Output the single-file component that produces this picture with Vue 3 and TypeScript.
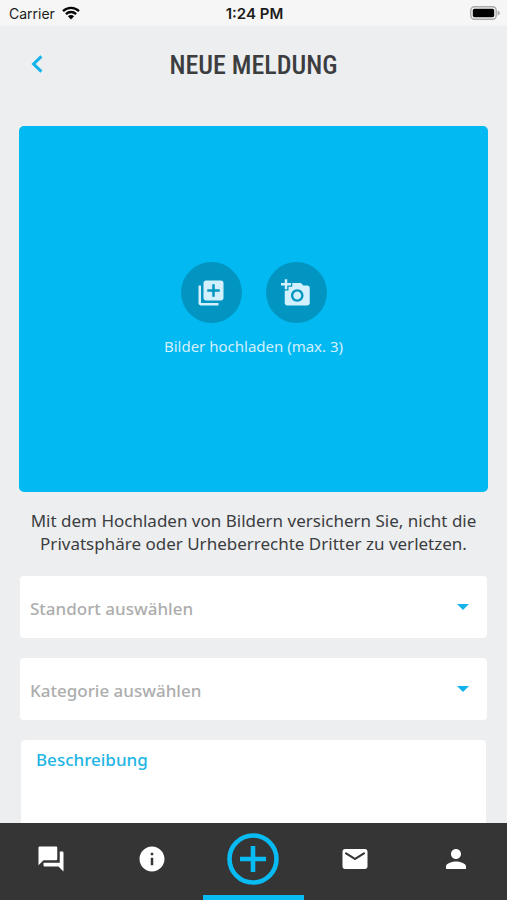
<script setup lang="ts">
import { ref } from 'vue'

interface Picker {
  id: string
  placeholder: string
  options: string[]
}

interface Tab {
  id: string
  label: string
  path: string
}

const pickers: Picker[] = [
  { id: 'standort', placeholder: 'Standort auswählen', options: [] },
  { id: 'kategorie', placeholder: 'Kategorie auswählen', options: [] },
]

const tabs: Tab[] = [
  {
    id: 'forum',
    label: 'Forum',
    path: 'M21 6h-2v9H6v2c0 .55.45 1 1 1h11l4 4V7c0-.55-.45-1-1-1zm-4 6V3c0-.55-.45-1-1-1H3c-.55 0-1 .45-1 1v14l4-4h10c.55 0 1-.45 1-1z',
  },
  {
    id: 'info',
    label: 'Info',
    path: 'M12 2C6.48 2 2 6.48 2 12s4.48 10 10 10 10-4.48 10-10S17.52 2 12 2zm1 15h-2v-6h2v6zm0-8h-2V7h2v2z',
  },
  { id: 'new', label: 'Neue Meldung', path: '' },
  {
    id: 'mail',
    label: 'Nachrichten',
    path: 'M20 4H4c-1.1 0-2 .9-2 2v12c0 1.1.9 2 2 2h16c1.1 0 2-.9 2-2V6c0-1.1-.9-2-2-2zm-.4 4.25-7.07 4.42c-.32.2-.74.2-1.06 0L4.4 8.25a.85.85 0 1 1 .9-1.44L12 11l6.7-4.19a.85.85 0 1 1 .9 1.44z',
  },
  {
    id: 'profile',
    label: 'Profil',
    path: 'M12 12c2.21 0 4-1.79 4-4s-1.79-4-4-4-4 1.79-4 4 1.79 4 4 4zm0 2c-2.67 0-8 1.34-8 4v2h16v-2c0-2.66-5.33-4-8-4z',
  },
]

const active = ref('new')
const selected = ref<Record<string, string>>({ standort: '', kategorie: '' })
const description = ref('')
</script>

<template>
  <div class="screen">
    <div class="status">
      <div class="carrier">
        <span>Carrier</span>
        <svg class="wifi" viewBox="0 0 18 14" aria-hidden="true">
          <path d="M1 5.2a11.5 11.5 0 0 1 16 0M3.9 8.1a7.3 7.3 0 0 1 10.2 0" fill="none" stroke="#050505" stroke-width="2.3" />
          <path d="M5.9 10.2a4.4 4.4 0 0 1 6.2 0L9 13.6z" fill="#050505" />
        </svg>
      </div>
      <strong class="time">1:24 PM</strong>
      <svg class="battery" viewBox="0 0 30 14" aria-hidden="true">
        <rect x="0.8" y="0.8" width="25.4" height="12.4" rx="3.6" fill="#f6f6f6" stroke="#a9a9a9" stroke-width="1.4" />
        <rect x="2.8" y="2.8" width="21.4" height="8.4" rx="1.6" fill="#000" />
        <path d="M27.6 4.6c1.6.5 2.2 1.4 2.2 2.4s-.6 1.9-2.2 2.4z" fill="#a9a9a9" />
      </svg>
    </div>

    <header class="header">
      <button class="back" type="button" aria-label="Zurück">
        <svg viewBox="0 0 12 18" aria-hidden="true">
          <path d="M10.4 1.4 2.6 9l7.8 7.6" fill="none" stroke="#14b2ea" stroke-width="3" />
        </svg>
      </button>
      <h1>NEUE MELDUNG</h1>
    </header>

    <main class="content">
      <section class="upload">
        <div class="actions">
          <button type="button" aria-label="Bilder aus Galerie wählen">
            <svg viewBox="0 0 24 24" aria-hidden="true">
              <path d="M4 6H2v14c0 1.1.9 2 2 2h14v-2H4V6zm16-4H8c-1.1 0-2 .9-2 2v12c0 1.1.9 2 2 2h12c1.1 0 2-.9 2-2V4c0-1.1-.9-2-2-2zm-1 9h-4v4h-2v-4H9V9h4V5h2v4h4v2z" />
            </svg>
          </button>
          <button type="button" aria-label="Foto aufnehmen">
            <svg viewBox="0 0 24 24" aria-hidden="true">
              <path d="M3 4V1h2v3h3v2H5v3H3V6H0V4h3zm3 6V7h3V4h7l1.83 2H21c1.1 0 2 .9 2 2v12c0 1.1-.9 2-2 2H5c-1.1 0-2-.9-2-2V10h3zm7 9c2.76 0 5-2.24 5-5s-2.24-5-5-5-5 2.24-5 5 2.24 5 5 5zm-3.2-5c0 1.77 1.43 3.2 3.2 3.2s3.2-1.43 3.2-3.2-1.43-3.2-3.2-3.2-3.2 1.43-3.2 3.2z" />
            </svg>
          </button>
        </div>
        <p>Bilder hochladen (max. 3)</p>
      </section>

      <p class="notice">
        Mit dem Hochladen von Bildern versichern Sie, nicht die Privatsphäre oder Urheberrechte Dritter zu verletzen.
      </p>

      <div v-for="picker in pickers" :key="picker.id" class="picker">
        <select :id="picker.id" v-model="selected[picker.id]" :aria-label="picker.placeholder">
          <option value="">{{ picker.placeholder }}</option>
          <option v-for="option in picker.options" :key="option">{{ option }}</option>
        </select>
        <svg class="caret" viewBox="0 0 12 6" aria-hidden="true">
          <path d="M0 0h12L6 6z" fill="#14b2ea" />
        </svg>
      </div>

      <div class="description">
        <label for="beschreibung">Beschreibung</label>
        <textarea id="beschreibung" v-model="description" rows="4"></textarea>
      </div>
    </main>

    <nav class="tabs">
      <button
        v-for="tab in tabs"
        :key="tab.id"
        type="button"
        :class="{ active: active === tab.id }"
        :aria-label="tab.label"
        @click="active = tab.id"
      >
        <svg v-if="tab.path" class="icon" viewBox="0 0 24 24" aria-hidden="true">
          <path :d="tab.path" />
        </svg>
        <svg v-else class="plus" viewBox="0 0 52 52" aria-hidden="true">
          <circle cx="26" cy="26" r="23.5" fill="none" stroke="#08bbf3" stroke-width="4.6" />
          <path d="M26 13v26M13 26h26" stroke="#08bbf3" stroke-width="4.6" />
        </svg>
      </button>
    </nav>
  </div>
</template>

<style>
body {
  margin: 0;
  background: #eceef0;
}
</style>

<style scoped>
.screen {
  display: flex;
  flex-direction: column;
  height: 100vh;
  overflow: hidden;
  background: #eceef0;
  color: #3c3d3f;
  font-family: "Noto Sans", "Open Sans", sans-serif;
}

button {
  padding: 0;
  border: 0;
  background: none;
  cursor: pointer;
}

svg {
  display: block;
}

.status {
  display: grid;
  grid-template-columns: 1fr auto 1fr;
  align-items: center;
  flex: none;
  height: 26px;
  padding: 0 7px 0 9px;
  background: #f6f6f6;
  color: #1c1c1c;
  font-family: Inter, sans-serif;
  font-size: 14px;
}

.carrier {
  display: flex;
  align-items: center;
  gap: 7px;
}

.wifi {
  width: 18px;
  height: 14px;
}

.time {
  padding-top: 2px;
  font-size: 15px;
  font-weight: 600;
  line-height: 20px;
}

.battery {
  justify-self: end;
  width: 30px;
  height: 14px;
}

.header {
  display: grid;
  grid-template-columns: 36px 1fr 36px;
  align-items: center;
  flex: none;
  height: 76px;
  padding: 0 19px;
}

.back {
  display: grid;
  place-items: center;
  height: 44px;
}

.back svg {
  width: 12px;
  height: 18px;
}

h1 {
  margin: 0;
  padding-top: 2px;
  font-family: "Roboto Condensed", "Liberation Sans Narrow", sans-serif;
  font-size: 26px;
  font-weight: 500;
  line-height: 36px;
  text-align: center;
  white-space: nowrap;
}

.content {
  flex: 1;
  min-height: 0;
  padding: 24px 19px 0;
  overflow-y: auto;
  scrollbar-width: none;
}

.upload {
  display: flex;
  flex-direction: column;
  align-items: center;
  justify-content: center;
  gap: 12px;
  height: 366px;
  border-radius: 5px;
  background: #02b9f2;
}

.actions {
  display: flex;
  gap: 24px;
}

.actions button {
  display: grid;
  place-items: center;
  box-sizing: border-box;
  width: 61px;
  height: 61px;
  padding-top: 2px;
  border-radius: 50%;
  background: #0295c2;
}

.actions svg {
  width: 30px;
  height: 30px;
  fill: #d2f0fd;
}

.upload p {
  margin: 0;
  color: #d2f0fd;
  font-size: 15px;
  line-height: 22px;
}

.notice {
  margin: 17px 0 21px;
  font-size: 17px;
  line-height: 23px;
  text-align: center;
}

.picker {
  display: grid;
  align-items: center;
  margin: 0 1px 20px;
}

.picker > * {
  grid-area: 1 / 1;
}

select {
  width: 100%;
  height: 62px;
  padding: 2px 40px 0 10px;
  border: 0;
  border-radius: 4px;
  background: #fff;
  color: #adadad;
  font: 500 17px "Noto Sans", "Open Sans", sans-serif;
  appearance: none;
}

.caret {
  justify-self: end;
  width: 12px;
  height: 6px;
  margin-right: 18px;
  pointer-events: none;
}

.description {
  margin: 0 2px;
  padding: 8px 15px;
  border-radius: 4px;
  background: #fff;
}

.description label {
  display: block;
  color: #22b5e5;
  font-size: 17px;
  font-weight: 500;
  line-height: 23px;
}

textarea {
  display: block;
  box-sizing: border-box;
  width: 100%;
  padding: 0;
  border: 0;
  background: none;
  color: inherit;
  font: 17px "Noto Sans", "Open Sans", sans-serif;
  resize: none;
}

.tabs {
  display: grid;
  grid-template-columns: repeat(5, 1fr);
  flex: none;
  height: 77px;
  background: #353535;
}

.tabs button {
  display: grid;
  place-items: center;
  border-bottom: 5px solid #353535;
}

.tabs .active {
  border-bottom-color: #08bbf3;
}

.icon {
  width: 30px;
  height: 30px;
  fill: #fff;
}

.plus {
  width: 52px;
  height: 52px;
}
</style>
